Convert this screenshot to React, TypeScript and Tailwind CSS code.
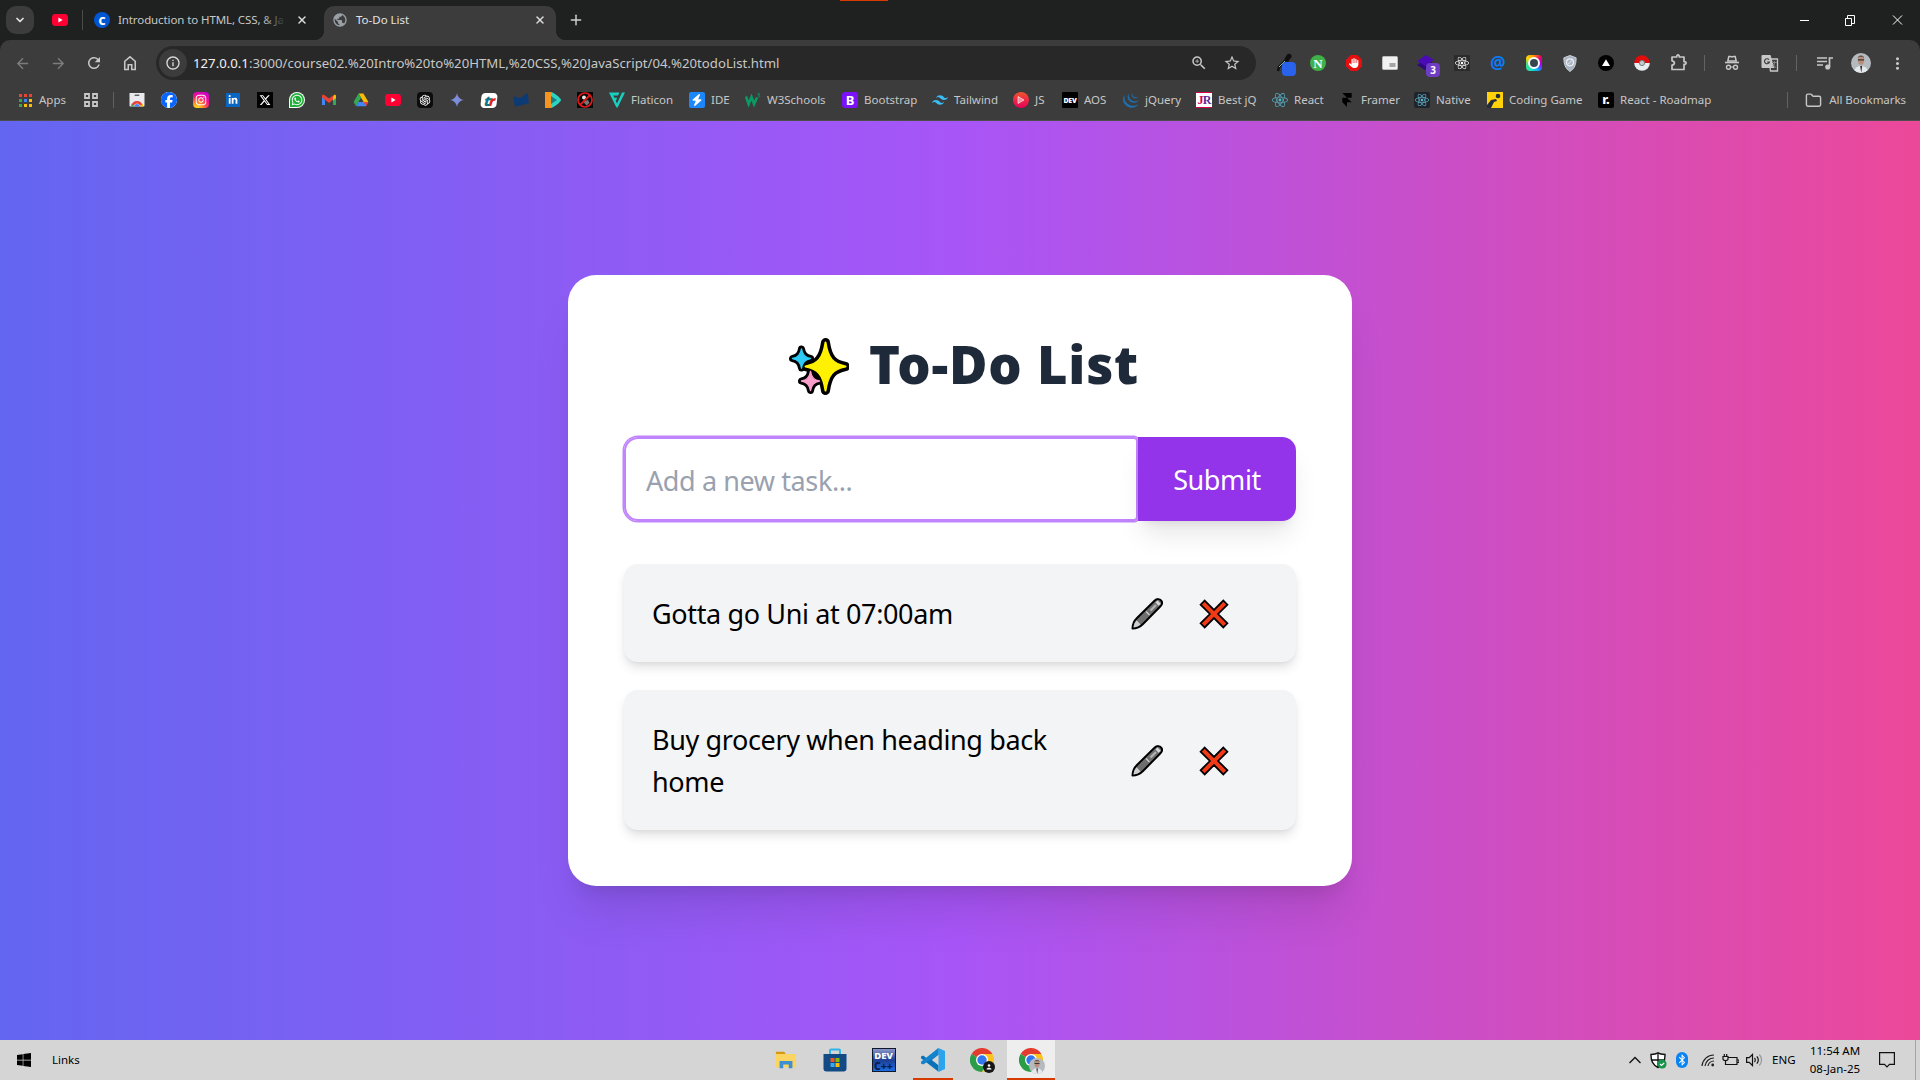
import type { ReactNode } from "react";
import { FaBluetoothB, FaFacebook, FaInstagram, FaLinkedinIn, FaReact, FaWhatsapp, FaWindows, FaXTwitter, FaHand, FaBolt } from "react-icons/fa6";
import { SiFramer, SiJquery, SiTailwindcss } from "react-icons/si";
import { AiOutlineOpenAI } from "react-icons/ai";
import { MdArrowBack, MdArrowForward, MdInfoOutline, MdMoreVert, MdPublic, MdRefresh, MdStarBorder, MdZoomIn } from "react-icons/md";
import { ChevronDown, Folder, Plus, X } from "lucide-react";

/* ---------- small brand marks ---------- */

function YouTube() {
  return (
    <svg viewBox="0 0 16 16" className="size-4">
      <rect x="0" y="2" width="16" height="12" rx="3.4" fill="#ff0033" />
      <path d="M6.4 5.5 10.6 8l-4.2 2.5z" fill="#fff" />
    </svg>
  );
}

function AppsGrid() {
  const colors = ["#ea4335", "#ea4335", "#ea4335", "#34a853", "#4285f4", "#fbbc04", "#34a853", "#fbbc04", "#fbbc04"];
  return (
    <svg viewBox="0 0 13 13" className="size-[13px]">
      {colors.map((c, i) => (
        <rect key={i} x={(i % 3) * 5} y={Math.floor(i / 3) * 5} width="3" height="3" fill={c} />
      ))}
    </svg>
  );
}

function TabGroups() {
  return (
    <svg viewBox="0 0 14 14" className="size-3.5" fill="none" stroke="#c7c7c7" strokeWidth="1.8">
      <path d="M1 1h4v4H1zM9 1h4v4H9zM1 9h4v4H1zM9 9h4v4H9z" />
    </svg>
  );
}

function WebStore() {
  return (
    <svg viewBox="0 0 16 16" className="size-4">
      <path d="M.5 1h15v12.6a1 1 0 0 1-1 1h-13a1 1 0 0 1-1-1z" fill="#e8eaed" />
      <rect x="5.5" y="2.5" width="5" height="1.5" rx=".7" fill="#5f6368" />
      <path d="M2.500 13.600a5.600 5.600 0 0 1 11 0H11a3.200 3.200 0 0 0-6 0z" fill="#ea4335" />
      <path d="M2.400 11.400 5 14.600H2.200z" fill="#34a853" />
      <path d="M13.600 11.400 11 14.600h3z" fill="#fbbc04" />
      <path d="M5.400 14.600a2.600 2.600 0 0 1 5.200 0z" fill="#4285f4" />
    </svg>
  );
}

function Gmail() {
  return (
    <svg viewBox="0 0 16 16" className="size-4">
      <path d="M1 4.200V13h3V8z" fill="#4285f4" />
      <path d="M15 4.200V13h-3V8z" fill="#34a853" />
      <path d="M12 5v3.400L15 6V4c0-1.300-1.400-1.600-2.200-1z" fill="#fbbc04" />
      <path d="M1 4c0-1.400 1.500-1.700 2.300-1L8 6.600 12 3.500v4.300L8 11 4 7.800 1 5.600z" fill="#ea4335" />
    </svg>
  );
}

function Drive() {
  return (
    <svg viewBox="0 0 16 16" className="size-4">
      <path d="M5.600 1.500h4.800L15.400 10h-4.800z" fill="#fbbc04" />
      <path d="M5.600 1.500 8 5.700 3 14.300.6 10z" fill="#34a853" />
      <path d="M5.400 10h10L13 14.300H3z" fill="#4285f4" />
      <path d="M10.600 10h4.800L13 14.300z" fill="#ea4335" />
    </svg>
  );
}

function Gemini() {
  return (
    <svg viewBox="0 0 16 16" className="size-4">
      <defs>
        <linearGradient id="gem" x1="0" y1="1" x2="1" y2="0">
          <stop stopColor="#5b9cf0" />
          <stop offset="1" stopColor="#a07bc8" />
        </linearGradient>
      </defs>
      <path d="M8 1C8.800 5.200 10.800 7.200 15 8 10.800 8.800 8.800 10.800 8 15 7.200 10.800 5.200 8.800 1 8 5.200 7.200 7.200 5.200 8 1z" fill="url(#gem)" />
    </svg>
  );
}

function TrMark() {
  return (
    <div className="flex h-[15px] w-4 -skew-x-6 items-center justify-center rounded bg-white text-[14px] leading-none font-black tracking-[-1.5px] italic">
      <span className="text-[#0e7490]">t</span>
      <span className="text-[#dc2626]">r</span>
    </div>
  );
}

function NavyMark() {
  return (
    <svg viewBox="0 0 16 16" className="size-4">
      <path d="M.2 4.500C3 4 5 7 8 5.500S12 2 14.800 1l1 10.300L2 14.800z" fill="#0b3a75" />
    </svg>
  );
}

function PlayMark() {
  return (
    <svg viewBox="0 0 16 16" className="size-4">
      <path d="M0 0h6v16H0z" fill="#f7941d" />
      <path d="M6 0c2 0 10 6 10 8s-8 8-10 8z" fill="#2dd4bf" />
      <path d="M6 4l6 4-6 4z" fill="#1c7f86" />
    </svg>
  );
}

function Banned() {
  return (
    <svg viewBox="0 0 16 16" className="size-4">
      <path d="M0 0h16v16H0z" fill="#080808" />
      <circle cx="7" cy="5.500" r="2" fill="#e5e5e5" />
      <path d="M6 9.500 11 8l1.500 3-3 2.500z" fill="#777" />
      <circle cx="8" cy="8" r="7" fill="none" stroke="#e11919" strokeWidth="1.700" />
      <path d="M13 3 3 13" stroke="#e11919" strokeWidth="1.800" />
    </svg>
  );
}

function Flaticon() {
  return (
    <svg viewBox="0 0 16 16" className="size-4">
      <path d="M0 .5h10.500L9 3.600H4.200l1.200 2.200h2.800L7 8.600h-.4L8 11.500l5-11h3L8.600 15.500H7.400z" fill="#17d1c0" />
    </svg>
  );
}

function W3Mark() {
  return (
    <svg viewBox="0 0 16 16" className="size-4" fill="none" stroke="#0a9a63">
      <path d="M1 4.500 3.600 12 6.500 5l2.600 7L12 5.500" strokeWidth="2.600" />
      <path d="M12.500 1.800h2.200l-1.300 1.600c2 0 1.500 2.400-.8 1.600" strokeWidth=".9" />
    </svg>
  );
}

function ReactBadge({ dark = false }: { dark?: boolean }) {
  return (
    <div className={dark ? "flex size-4 items-center justify-center rounded-[2px] bg-[#20232a]" : "flex size-4 items-center justify-center"}>
      <FaReact className={dark ? "size-3.5 text-[#61b8cf]" : "size-4 text-[#58b4c9]"} />
    </div>
  );
}

function CodingGame() {
  return (
    <svg viewBox="0 0 16 16" className="size-4">
      <path d="M0 0h16v16H0z" fill="#ffd20a" />
      <circle cx="11" cy="4" r="2.300" fill="#252e38" />
      <path d="M0 16V13l4-5 5-1 1 2-3 1-3 6z" fill="#252e38" />
    </svg>
  );
}

/* ---------- browser chrome ---------- */

function TabStrip() {
  return (
    <div className="relative flex h-10 items-center bg-[#1f2120]">
      <div className="ml-1.5 flex size-7 items-center justify-center rounded-[10px] bg-[#3c3c3c]">
        <ChevronDown className="size-3 text-[#e3e3e3]" strokeWidth={3.500} />
      </div>
      <div className="ml-[18px]"><YouTube /></div>
      <div className="ml-[14px] h-5 w-px bg-[#4a4b4b]" />
      <div className="ml-[11px] flex size-4 items-center justify-center rounded-full bg-[#0056d2] text-[11px] leading-none font-black text-white">C</div>
      <div className="relative ml-2 w-[168px] text-[11.5px] whitespace-nowrap text-[#c7c7c7]">
        <span className="tracking-[-0.1px]">Introduction to HTML, CSS, &amp; Ja</span>
        <div className="absolute inset-y-0 right-0 w-6 bg-linear-to-r from-transparent to-[#1f2120]" />
      </div>
      <X className="ml-2.5 size-3 text-[#dcdcdc]" strokeWidth={3} />
      <div className="relative ml-4 mt-1.5 flex h-[34px] w-[232px] items-center self-start rounded-t-[10px] bg-[#3c3c3c] before:absolute before:bottom-0 before:-left-2.5 before:size-2.5 before:bg-[radial-gradient(circle_at_0_0,#1f2120_10px,#3c3c3c_10.5px)] after:absolute after:-right-2.5 after:bottom-0 after:size-2.5 after:bg-[radial-gradient(circle_at_100%_0,#1f2120_10px,#3c3c3c_10.5px)]">
        <MdPublic className="-mt-1.5 ml-2 size-4 text-[#9aa0a6]" />
        <span className="-mt-1.5 ml-2 text-[11.5px] text-[#e3e3e3]">To-Do List</span>
        <X className="-mt-1.5 mr-2.5 ml-auto size-3 text-[#dcdcdc]" strokeWidth={3} />
      </div>
      <Plus className="ml-3 size-4 text-[#d0d0d0]" strokeWidth={2.200} />
      <div className="absolute top-0 left-[840px] h-px w-12 bg-[#d83b01]" />
      <svg viewBox="0 0 104 12" className="mr-[17px] ml-auto h-3 w-[104px]" fill="none" stroke="#fff" strokeWidth="1">
        <path d="M1 6.500h9M46.500 4.500h6v7h-6zM48.500 4V1.500h7v8H53M94 1.500l9 9M103 1.500l-9 9" />
      </svg>
    </div>
  );
}

function Slot({ children }: { children: ReactNode }) {
  return <div className="relative flex w-9 shrink-0 items-center justify-center">{children}</div>;
}

function Divider({ className }: { className: string }) {
  return <div className={`w-px shrink-0 bg-[#626262] ${className}`} />;
}

function Extensions() {
  return (
    <div className="ml-2 flex items-center">
      <Slot>
        <svg viewBox="0 0 20 20" className="ml-1 size-5">
          <path d="M14 2c2-1 3.500 1 2 2.500l-2 2-1.500-2zM11 5l3.500 3.500" fill="#101010" stroke="#101010" strokeWidth="2" />
          <path d="M12 7 5 14l-1 4" stroke="#111" strokeWidth="2.500" fill="none" />
          <path d="m11 8-6 6" stroke="#8fbf97" strokeWidth="1" />
        </svg>
        <div className="absolute top-[9px] left-[18px] size-3.5 rounded-[4px] bg-[#2962eb]" />
      </Slot>
      <Slot>
        <div className="flex size-4 items-center justify-center rounded-full bg-[#3eb149] font-['Liberation_Serif'] text-[13px] leading-none font-bold text-white">N</div>
      </Slot>
      <Slot>
        <svg viewBox="0 0 16 16" className="size-4"><path d="M4.700 0h6.600L16 4.700v6.600L11.300 16H4.700L0 11.300V4.700z" fill="#e60f0f" /></svg>
        <FaHand className="absolute size-2.5 text-white" />
      </Slot>
      <Slot>
        <svg viewBox="0 0 16 14" className="h-3.5 w-4">
          <rect x=".5" y=".5" width="15" height="13" rx="1" fill="#f1f1f1" stroke="#bdbdbd" />
          <rect x="7.500" y="7" width="6" height="4" fill="#a4a4a4" />
        </svg>
      </Slot>
      <Slot>
        <svg viewBox="0 0 18 18" className="size-[18px]">
          <path d="m9 5 8 5-9 6-8-5z" fill="#2d0a78" />
          <path d="m9 1 8 5-9 6-8-5z" fill="#4a0bb5" />
        </svg>
        <div className="absolute top-[9px] left-[18px] flex size-3.5 items-center justify-center rounded-[4px] bg-[#6f3cc4] text-[10px] leading-none font-bold text-white">3</div>
      </Slot>
      <Slot>
        <div className="flex size-4 items-center justify-center bg-[#2b2b2b]"><FaReact className="size-3.5 text-white" /></div>
      </Slot>
      <Slot><span className="-mt-0.5 text-[17px] leading-none font-bold text-[#0a7cf5]">@</span></Slot>
      <Slot>
        <div className="flex size-4 items-center justify-center rounded-[4px] bg-[conic-gradient(#ff8a00,#e60073,#a100ff,#00b4ff,#1de9b6,#3ddc84,#ffd500,#ff8a00)]">
          <div className="size-3 rounded-full border-2 border-white bg-[#37474f]" />
        </div>
      </Slot>
      <Slot>
        <svg viewBox="0 0 16 18" className="h-[17px] w-4">
          <path d="M8 .5 14.500 3c0 7-1.500 11-6.500 14.500C3 14 1.500 10 1.500 3z" fill="#a9b3c1" stroke="#cfd5dd" />
          <circle cx="8" cy="7.800" r="3.700" fill="none" stroke="#eef1f5" strokeWidth="1.300" />
          <path d="M6 9.500 10 6" stroke="#eef1f5" />
        </svg>
      </Slot>
      <Slot>
        <svg viewBox="0 0 16 16" className="size-4"><circle cx="8" cy="8" r="8" fill="#000" /><path d="m8 4.300 4 6.700H4z" fill="#fff" /></svg>
      </Slot>
      <Slot>
        <svg viewBox="0 0 16 16" className="size-4">
          <path d="M.2 8a7.800 7.800 0 0 1 15.600 0z" fill="#e00d0d" />
          <path d="M.2 8a7.800 7.800 0 0 0 15.600 0z" fill="#e9eef0" />
          <circle cx="8" cy="8" r="2.600" fill="#c3ccce" stroke="#788184" />
        </svg>
      </Slot>
      <Slot>
        <svg viewBox="0 0 18 18" className="-mt-0.5 ml-0.5 size-[18px]" fill="none" stroke="#c7c7c7" strokeWidth="1.700" strokeLinejoin="round">
          <path d="M2 4h4.700c-.3-2.800 2.900-2.800 2.600 0H14v4.700c2.800-.3 2.800 2.900 0 2.600v5.200H2v-4.300c3.200-.6 3.200-3.800 0-4.400z" />
        </svg>
      </Slot>
      <Divider className="ml-2 h-4" />
    </div>
  );
}

function Avatar({ className }: { className: string }) {
  return (
    <svg viewBox="0 0 20 20" className={`rounded-full ${className}`}>
      <path d="M0 0h20v20H0z" fill="#b5babf" />
      <path d="M3 20c0-5 3-7 7-7s7 2 7 7z" fill="#e6e9ec" />
      <path d="m9.200 13 1 7 1-7z" fill="#2b2f33" />
      <ellipse cx="10" cy="7.300" rx="3.100" ry="4.600" fill="#b98f7c" />
      <path d="M6.800 5.500C6.500 1.500 13.500 1.500 13.200 5.500L12 3.800H8z" fill="#4a4441" />
      <path d="M6.900 6.200h6.200v1.400H6.900z" fill="#3a3533" />
    </svg>
  );
}

function Toolbar() {
  return (
    <div className="bg-[#1f2120]">
      <div className="flex h-[46px] items-center rounded-t-[10px] bg-[#3c3c3c]">
        <div className="flex w-[156px] shrink-0 items-center pl-1">
          <Slot><MdArrowBack className="size-[17px] text-[#7c7c7c]" /></Slot>
          <Slot><MdArrowForward className="size-[17px] text-[#7c7c7c]" /></Slot>
          <Slot><MdRefresh className="size-[18px] text-[#c7c7c7]" /></Slot>
          <Slot>
            <svg viewBox="0 0 16 18" className="h-4 w-3.5" fill="none" stroke="#c7c7c7" strokeWidth="1.800">
              <path d="M2 16.500V7l6-5 6 5v9.500h-4v-5.500H6v5.500z" />
            </svg>
          </Slot>
        </div>
        <div className="flex h-[34px] w-[1100px] shrink-0 items-center rounded-full bg-[#282828] pl-[3px]">
          <div className="flex size-7 items-center justify-center rounded-full bg-[#3c3c3c]">
            <MdInfoOutline className="size-4 text-[#dcdcdc]" />
          </div>
          <div className="ml-[6px] pt-px text-[13.2px] whitespace-nowrap text-[#c7c7c7]">
            <span className="text-[#f1f1f1]">127.0.0.1</span>:3000/course02.%20Intro%20to%20HTML,%20CSS,%20JavaScript/04.%20todoList.html
          </div>
          <MdZoomIn className="ml-auto size-[18px] text-[#c7c7c7]" />
          <MdStarBorder className="mr-[15px] ml-[15px] size-[18px] text-[#c7c7c7]" />
        </div>
        <Extensions />
        <div className="ml-2 flex shrink-0 items-center">
          <Slot>
            <svg viewBox="0 0 16 16" className="ml-0.5 size-4">
              <path d="M4.800 1.500h1.700l1.500.5 1.500-.5h1.700l1 4.500H3.800z" fill="none" stroke="#c7c7c7" strokeWidth="1.500" />
              <path d="M1 7.500h14" stroke="#c7c7c7" strokeWidth="1.600" />
              <circle cx="4.500" cy="12.300" r="2" fill="none" stroke="#c7c7c7" strokeWidth="1.400" />
              <circle cx="11.500" cy="12.300" r="2" fill="none" stroke="#c7c7c7" strokeWidth="1.400" />
              <path d="M6.500 12h3" stroke="#c7c7c7" />
            </svg>
          </Slot>
          <Slot>
            <svg viewBox="0 0 18 18" className="ml-[5px] size-[18px]">
              <path d="M8 5h8.500v12H9.500z" fill="none" stroke="#c7c7c7" strokeWidth="1.300" />
              <path d="M1.500 1h8l4 13h-12a1 1 0 0 1-1-1V2a1 1 0 0 1 1-1z" fill="#c7c7c7" />
              <path d="M8 5.700a2.500 2.500 0 1 0 .4 2.300H6" fill="none" stroke="#3c3c3c" strokeWidth="1.200" />
              <path d="M11 8.500h5M13.500 7v1.500c0 2-1 3.500-2 4.300M12 10c.5 1.500 1.500 2.500 3 3.500" fill="none" stroke="#858585" />
            </svg>
          </Slot>
          <Divider className="ml-[11px] h-4" />
          <div className="ml-[10px] flex">
            <Slot>
              <svg viewBox="0 0 16 16" className="size-4" fill="none" stroke="#c7c7c7" strokeWidth="1.700">
                <path d="M0 3h10M0 6.500h10M0 10h6M12.500 12V3H16" />
                <circle cx="10.700" cy="12" r="1.700" fill="#c7c7c7" />
              </svg>
            </Slot>
            <Slot><Avatar className="size-5" /></Slot>
            <Slot><MdMoreVert className="size-[19px] text-[#c7c7c7]" /></Slot>
          </div>
        </div>
      </div>
    </div>
  );
}

function Bookmark({ width, icon, label }: { width: string; icon: ReactNode; label?: string }) {
  return (
    <div className={`flex shrink-0 items-center gap-1.5 whitespace-nowrap ${width}`}>
      <div className="flex size-4 shrink-0 items-center justify-center">{icon}</div>
      {label}
    </div>
  );
}

function BookmarksBar() {
  return (
    <div className="flex h-[35px] items-center border-b border-[#4d4d4d] bg-[#3c3c3c] pb-[6px] pl-[17px] text-[11.5px] text-[#c7c7c7]">
      <Bookmark width="w-[67px]" icon={<AppsGrid />} label="Apps" />
      <TabGroups />
      <Divider className="mx-[15px] h-4" />
      <Bookmark width="w-8" icon={<WebStore />} />
      <Bookmark width="w-8" icon={<div className="size-4 rounded-full bg-white"><FaFacebook className="size-4 text-[#0866ff]" /></div>} />
      <Bookmark width="w-8" icon={<div className="flex size-4 items-center justify-center rounded-[4px] bg-[radial-gradient(circle_at_25%_105%,#ffd521_10%,#ff7a2e_35%,#f50f8c_62%,#b900e8_100%)]"><FaInstagram className="size-3 text-white" /></div>} />
      <Bookmark width="w-8" icon={<div className="flex h-3.5 w-3.5 items-center justify-center bg-[#0a66c2]"><FaLinkedinIn className="size-2.5 text-white" /></div>} />
      <Bookmark width="w-8" icon={<div className="flex size-4 items-center justify-center bg-black"><FaXTwitter className="size-3 text-white" /></div>} />
      <Bookmark width="w-8" icon={<div className="flex size-4 items-center justify-center rounded-full rounded-bl-[3px] bg-white"><div className="flex size-3.5 items-center justify-center rounded-full rounded-bl-[2px] bg-[#1faf38]"><FaWhatsapp className="size-3 text-white" /></div></div>} />
      <Bookmark width="w-8" icon={<Gmail />} />
      <Bookmark width="w-8" icon={<Drive />} />
      <Bookmark width="w-8" icon={<YouTube />} />
      <Bookmark width="w-8" icon={<div className="flex size-4 items-center justify-center rounded-[4px] bg-[#0c0c0c]"><AiOutlineOpenAI className="size-3.5 text-white" /></div>} />
      <Bookmark width="w-8" icon={<Gemini />} />
      <Bookmark width="w-8" icon={<TrMark />} />
      <Bookmark width="w-8" icon={<NavyMark />} />
      <Bookmark width="w-8" icon={<PlayMark />} />
      <Bookmark width="w-8" icon={<Banned />} />
      <Bookmark width="w-20" icon={<Flaticon />} label="Flaticon" />
      <Bookmark width="w-14" icon={<div className="flex size-4 items-center justify-center rounded-[2px] bg-[#1b87fb]"><FaBolt className="size-3 text-white" /></div>} label="IDE" />
      <Bookmark width="w-[97px]" icon={<W3Mark />} label="W3Schools" />
      <Bookmark width="w-[90px]" icon={<div className="flex size-4 items-center justify-center rounded-[3px] bg-[#7a11f7] text-[13px] leading-none font-bold text-white">B</div>} label="Bootstrap" />
      <Bookmark width="w-[81px]" icon={<SiTailwindcss className="size-4 text-[#38bdf8]" />} label="Tailwind" />
      <Bookmark
        width="w-[49px]"
        icon={
          <svg viewBox="0 0 16 16" className="size-4">
            <defs><linearGradient id="js" x1="0" y1="0" x2="0" y2="1"><stop stopColor="#f0542d" /><stop offset="1" stopColor="#e6005c" /></linearGradient></defs>
            <circle cx="8" cy="8" r="8" fill="url(#js)" />
            <path d="m5 4.500 6 3.500-6 3.500z" fill="#f08a9c" stroke="#fff" strokeWidth=".6" />
          </svg>
        }
        label="JS"
      />
      <Bookmark width="w-[61px]" icon={<div className="flex size-4 items-center justify-center rounded-[1px] bg-black text-[7px] leading-none font-black tracking-[-0.3px] text-white">DEV</div>} label="AOS" />
      <Bookmark width="w-[73px]" icon={<SiJquery className="size-4 text-[#1f6fae]" />} label="jQuery" />
      <Bookmark width="w-[76px]" icon={<div className="flex size-4 items-center justify-center border-y border-[#d6004f] bg-white font-['Liberation_Serif'] text-[12px] leading-none font-bold tracking-[-0.8px]"><span className="text-[#d6004f]">J</span><span className="text-[#5c2d91]">R</span></div>} label="Best jQ" />
      <Bookmark width="w-[67px]" icon={<ReactBadge />} label="React" />
      <Bookmark width="w-[75px]" icon={<SiFramer className="size-3.5 text-black" />} label="Framer" />
      <Bookmark width="w-[73px]" icon={<ReactBadge dark />} label="Native" />
      <Bookmark width="w-[111px]" icon={<CodingGame />} label="Coding Game" />
      <Bookmark width="w-[130px]" icon={<div className="flex size-4 items-center justify-center rounded-[2px] bg-black pb-0.5 text-[13px] leading-none font-extrabold text-white">r.</div>} label="React - Roadmap" />
      <Divider className="ml-auto h-4" />
      <Folder className="ml-[17px] size-[17px]" strokeWidth={2} />
      <span className="mr-[14px] ml-[7px] tracking-[-0.05px] whitespace-nowrap">All Bookmarks</span>
    </div>
  );
}

/* ---------- to-do app ---------- */

function Sparkles() {
  const small = "M0-9.500C.8-3.500 3.500-.8 9 0 3.500.8.8 3.500 0 9.500-.8 3.500-3.500.8-9 0-3.500-.8-.8-3.500 0-9.500z";
  const big = "M0-24C2.500-7.500 7.500-2.500 20 0 7.500 2.500 2.500 7.500 0 24-2.500 7.500-7.500 2.500-20 0-7.500-2.500-2.500-7.500 0-24z";
  return (
    <svg viewBox="0 0 62 60" className="h-[60px] w-[62px]" strokeLinejoin="round">
      <path d="M26 33v14h10V33z" fill="#000" />
      <path d={small} transform="translate(14.500 23.500)" fill="#000" stroke="#000" strokeWidth="7" />
      <path d={small} transform="translate(23.500 46)" fill="#000" stroke="#000" strokeWidth="7" />
      <path d={big} transform="translate(38.500 31.500)" fill="#000" stroke="#000" strokeWidth="9" />
      <path d={big} transform="translate(38.500 31.500)" fill="#fff100" stroke="#fff100" strokeWidth="2" />
      <path d={small} transform="translate(14.500 23.500)" fill="#2ecbf7" stroke="#2ecbf7" strokeWidth="1.500" />
      <path d={small} transform="translate(23.500 46)" fill="#fa9fcb" stroke="#fa9fcb" strokeWidth="1.500" />
    </svg>
  );
}

function Pen() {
  return (
    <svg viewBox="0 0 32 32" className="size-8" strokeLinejoin="round">
      <path d="M1.500 30.500C1.500 26 3 23 6 20L23.500 2.800C26 .3 29 1 30 2.300c1.300 1.500 1.500 4-.8 6.200L12 26c-3 3-6 4.500-10.500 4.500z" fill="#6e6e6e" stroke="#000" strokeWidth="2" />
      <path d="M2.500 29.500C2.800 26.500 4 24 5.500 22.300L9.600 26.500C8 28 5.500 29.200 2.500 29.500z" fill="#cfcfcf" />
      <path d="m25.500 3.500 3.200 3.200" stroke="#d8d8d8" strokeWidth="3" />
      <path d="m15 13.500 3.500 3.500" stroke="#cfcfcf" strokeWidth="1.300" />
      <path d="m19.500 12.500 5.500-5.500" stroke="#b5b5b5" strokeWidth="2" />
    </svg>
  );
}

function Cross() {
  return (
    <svg viewBox="0 0 30 30" className="size-[30px]">
      <path d="M5.700 1.600 15 10.900 24.300 1.600 28.400 5.700 19.100 15 28.400 24.300 24.300 28.400 15 19.100 5.700 28.400 1.600 24.300 10.900 15 1.600 5.700z" fill="#f03a17" stroke="#000" strokeWidth="1.750" />
    </svg>
  );
}

function Task({ text }: { text: string }) {
  return (
    <li className="flex items-center rounded-[14px] bg-gray-100 px-7 pt-[29px] pb-[27px] shadow-[0_7px_10.5px_-1.75px_rgb(0_0_0/0.1),0_3.5px_7px_-3.5px_rgb(0_0_0/0.1)]">
      <span className="w-[440px] tracking-[-0.37px] text-black">{text}</span>
      <button className="ml-[39px]"><Pen /></button>
      <button className="ml-9"><Cross /></button>
    </li>
  );
}

function TodoPage() {
  return (
    <main className="flex h-[919px] items-center justify-center bg-linear-to-r/srgb from-[#6366f1] via-[#a855f7] to-[#ec4899]">
      <section className="w-[784px] rounded-[28px] bg-white p-14 text-[27px] leading-[42px] shadow-[0_35px_43.75px_-8.75px_rgb(0_0_0/0.1),0_14px_17.5px_-10.5px_rgb(0_0_0/0.1)]">
        <h1 className="mb-[42px] flex h-16 items-center pt-1 pl-[163px] text-[52.5px] font-black tracking-[0.8px] text-gray-800">
          <Sparkles />
          <span className="-mt-0.5 ml-[20px] whitespace-nowrap">To-Do List</span>
        </h1>
        <form className="mb-[43px] flex">
          <input
            placeholder="Add a new task..."
            className="h-[84px] w-[514px] rounded-l-[14px] rounded-r-[4px] border-2 border-[#c084fc] px-5 pt-0.5 tracking-[-0.4px] shadow-[0_0_0_1.5px_#c084fc] outline-none placeholder:text-gray-400"
          />
          <button type="button" className="relative h-[84px] w-[158px] rounded-r-[14px] bg-[#9333ea] pt-0.5 tracking-[-0.4px] text-white shadow-[0_17.5px_26.25px_-5.25px_rgb(0_0_0/0.1),0_7px_10.5px_-7px_rgb(0_0_0/0.1)]">
            Submit
          </button>
        </form>
        <ul className="flex flex-col gap-7">
          <Task text="Gotta go Uni at 07:00am" />
          <Task text="Buy grocery when heading back home" />
        </ul>
      </section>
    </main>
  );
}

/* ---------- taskbar ---------- */

function ChromeLogo({ children }: { children: ReactNode }) {
  return (
    <div className="relative size-6">
      <svg viewBox="0 0 24 24" className="size-6">
        <path d="M12 12 1.600 6A12 12 0 0 1 22.400 6z" fill="#e33b2e" />
        <path d="M12 12 1.600 6A12 12 0 0 0 12 24l5.200-9z" fill="#2a9d47" />
        <path d="M12 12l5.200 3L12 24A12 12 0 0 0 22.400 6H12z" fill="#fcc31e" />
        <circle cx="12" cy="12" r="6" fill="#fff" />
        <circle cx="12" cy="12" r="4.700" fill="#3377ee" />
      </svg>
      {children}
    </div>
  );
}

function TaskSlot({ children, state = "idle" }: { children: ReactNode; state?: "idle" | "open" | "active" }) {
  const look = {
    idle: "flex h-10 w-12 items-center justify-center",
    open: "flex h-10 w-10 items-center justify-center border-b-2 border-[#d83b01] pt-0.5",
    active: "flex h-10 w-12 items-center justify-center border-b-2 border-[#d83b01] bg-[#eeeeee] pt-0.5",
  };
  return (
    <div className="flex w-[49px] justify-center">
      <div className={look[state]}>{children}</div>
    </div>
  );
}

function Taskbar() {
  return (
    <footer className="flex h-10 items-center bg-[#d5d5d5] text-[11.5px] text-black">
      <FaWindows className="ml-4 size-4" />
      <span className="ml-5 w-[709px]">Links</span>
      <nav className="flex h-10">
        <TaskSlot>
          <svg viewBox="0 0 24 24" className="size-[22px]">
            <path d="M1 3h9l2 3H1z" fill="#d59a10" />
            <path d="M1 5.500h22V20H1z" fill="#fcd462" />
            <path d="M5 21v-8h14v8h-4v-4H9v4z" fill="#3c8fd0" />
          </svg>
        </TaskSlot>
        <TaskSlot>
          <svg viewBox="0 0 24 24" className="size-6">
            <path d="M7 6V2.500a1 1 0 0 1 1-1h8a1 1 0 0 1 1 1V6" fill="none" stroke="#2fb5ea" strokeWidth="2" />
            <path d="M.5 6h23v14.500a3 3 0 0 1-3 3h-17a3 3 0 0 1-3-3z" fill="#124a86" />
            <path d="M7.500 10h4v4h-4z" fill="#f35325" /><path d="M12.500 10h4v4h-4z" fill="#81bc06" />
            <path d="M7.500 15h4v4h-4z" fill="#35a9ee" /><path d="M12.500 15h4v4h-4z" fill="#ffba08" />
          </svg>
        </TaskSlot>
        <TaskSlot>
          <div className="flex size-6 flex-col items-center border border-[#10182e] bg-linear-to-b from-[#8d95c8] via-[#1d3f94] to-[#1b6fe0] leading-none">
            <span className="mt-0.5 text-[9.500px] font-extrabold text-white">DEV</span>
            <span className="text-[10.500px] font-extrabold text-[#081a48]">C++</span>
          </div>
        </TaskSlot>
        <TaskSlot state="open">
          <svg viewBox="0 0 24 24" className="size-6">
            <path d="M17.500 0 6 10.500 2.200 7.600 0 8.600v1.700l17.500 13.500z" fill="#0a72b8" />
            <path d="M17.500 0v6.500L2.200 16.500 0 15.500v-1.700z" fill="#1283cc" />
            <path d="M17.500 0 24 3v18l-6.500 3z" fill="#2ba4ee" />
            <path d="M17.500 6.800v10.400L10.800 12z" fill="#d5d5d5" />
          </svg>
        </TaskSlot>
        <TaskSlot>
          <ChromeLogo>
            <svg viewBox="0 0 12 12" className="absolute -right-px -bottom-px size-3">
              <circle cx="6" cy="6" r="6" fill="#161616" />
              <circle cx="6" cy="4.500" r="1.300" fill="#fff" /><path d="M3.500 8.500c0-2.500 5-2.500 5 0z" fill="#fff" />
            </svg>
          </ChromeLogo>
        </TaskSlot>
        <TaskSlot state="active">
          <ChromeLogo><Avatar className="absolute -right-0.5 -bottom-0.5 size-4" /></ChromeLogo>
        </TaskSlot>
      </nav>
      <div className="ml-auto flex h-10 items-center">
        <svg viewBox="0 0 12 8" className="h-2 w-3" fill="none" stroke="#111" strokeWidth="1.300"><path d="m.5 7 5.500-5.500L11.500 7" /></svg>
        <svg viewBox="0 0 17 17" className="ml-[9px] size-[17px]">
          <path d="M8 .8C10 2 12.500 2.300 15 2.500c.2 6.500-1.500 10.500-7 13-5.500-2.500-7.200-6.500-7-13C3.500 2.300 6 2 8 .8z" fill="#fff" stroke="#111" strokeWidth="1.400" />
          <path d="M8 1v14M1 8h14" stroke="#111" strokeWidth="1.300" />
          <circle cx="12" cy="12" r="4.600" fill="#16944a" /><path d="m10 12 1.500 1.500L14.200 11" fill="none" stroke="#fff" strokeWidth="1.200" />
        </svg>
        <div className="ml-[9px] flex h-4 w-3 items-center justify-center rounded-full bg-[#0a84f0]"><FaBluetoothB className="size-3 text-white" /></div>
        <svg viewBox="0 0 14 14" className="ml-[13px] size-3.5" fill="none" stroke="#222" strokeWidth="1.200">
          <path d="M1 13A12 12 0 0 1 13 2M4 13a9 9 0 0 1 9-8M7 13a6 6 0 0 1 6-5" />
          <circle cx="11.700" cy="12" r="1.400" fill="#222" stroke="none" />
        </svg>
        <svg viewBox="0 0 17 13" className="ml-[7px] h-[13px] w-[17px]" fill="none" stroke="#111" strokeWidth="1.200">
          <path d="M6.500 3.500H15v7H5M15.500 6H17v2.500h-1.500M1 2.500h5V5c0 2-5 2-5 0zM2.300 0v2.500M4.700 0v2.500M3.500 6.500v4H5" />
        </svg>
        <svg viewBox="0 0 17 14" className="ml-[7px] h-3.5 w-[17px]" fill="none" stroke="#111" strokeWidth="1.200">
          <path d="M.6 4.700h2.600l3.300-3.200v11L3.200 9.300H.6zM8.500 5c1 1 1 3 0 4M10.800 3.300c2 2 2 5.400 0 7.400" /><path d="M13.300 1.500c3 3 3 8 0 11" stroke="#999" />
        </svg>
        <span className="ml-[9px] w-[23px]">ENG</span>
        <div className="ml-[14px] w-[52px] text-center leading-[18px] whitespace-nowrap">11:54 AM<br />08-Jan-25</div>
        <svg viewBox="0 0 16 16" className="ml-[18px] size-4" fill="none" stroke="#111" strokeWidth="1.200"><path d="M.6.6h14.800v11.800H10.500L8 15l-2.500-2.600H.6z" /></svg>
        <div className="mr-1 ml-5 h-10 w-px bg-[#a5a5a5]" />
      </div>
    </footer>
  );
}

export default function App() {
  return (
    <div className="h-[1080px] w-[1920px] overflow-hidden font-['Noto_Sans','Open_Sans',sans-serif]">
      <header>
        <TabStrip />
        <Toolbar />
        <BookmarksBar />
      </header>
      <TodoPage />
      <Taskbar />
    </div>
  );
}
